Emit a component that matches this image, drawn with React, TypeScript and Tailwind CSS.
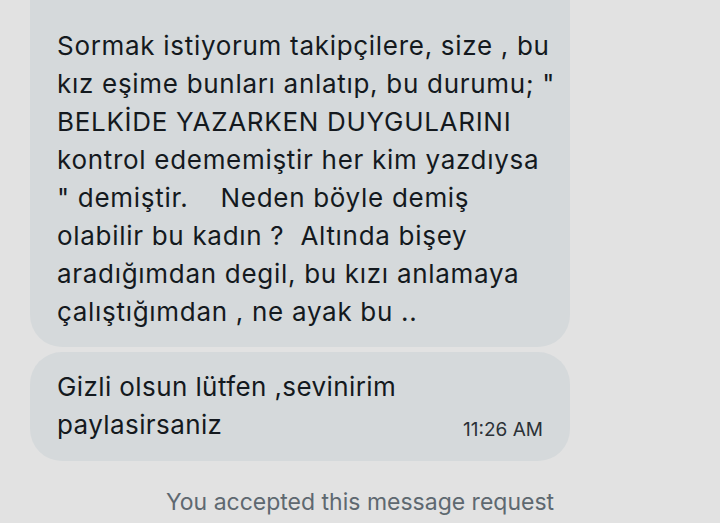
import React from "react"

const firstMessage = [
  "Sormak istiyorum takipçilere, size , bu",
  "kız eşime bunları anlatıp, bu durumu; \"",
  "BELKİDE YAZARKEN DUYGULARINI",
  "kontrol edememiştir her kim yazdıysa",
  "\" demiştir.    Neden böyle demiş",
  "olabilir bu kadın ?  Altında bişey",
  "aradığımdan degil, bu kızı anlamaya",
  "çalıştığımdan , ne ayak bu ..",
]

export default function App() {
  return (
    <div
      className="w-[720px] h-[523px] overflow-hidden bg-[#e2e2e2] text-[#14191e]"
      style={{ fontFamily: "Inter, 'Noto Sans', sans-serif" }}
    >
      <div className="pl-[30px] w-[570px] -mt-[40px] flex flex-col gap-[5px]">
        {/* long message, top cut off */}
        <div className="bg-[#d5d9db] rounded-[32px] pt-[67px] pb-4 px-[27px]">
          <p className="text-[26px] leading-[38px] tracking-[0.7px] whitespace-pre">
            {firstMessage.map((line, i) => (
              <span key={i} className="block">{line}</span>
            ))}
          </p>
        </div>

        <div className="bg-[#d5d9db] rounded-[32px] pt-4 pb-[17px] px-[27px]">
          <p className="text-[26px] leading-[38px] tracking-[0.4px]">Gizli olsun lütfen ,sevinirim</p>
          <div className="flex items-baseline justify-between">
            <p className="text-[26px] leading-[38px] tracking-[0.4px]">paylasirsaniz</p>
            <span className="text-[19px] text-[#2b3137] translate-y-[2px]">11:26 AM</span>
          </div>
        </div>
      </div>

      <p className="mt-[24px] text-center text-[23px] text-[#5e6870]">
        You accepted this message request
      </p>
    </div>
  )
}
